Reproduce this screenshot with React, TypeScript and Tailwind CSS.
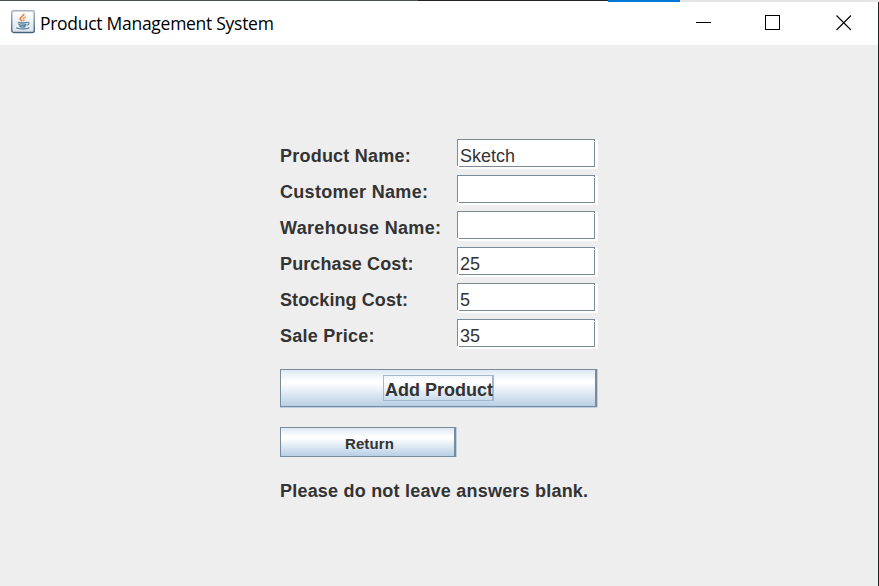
import React from 'react';

type Field = { label: string; value: string; tracking: string };

const fields: Field[] = [
  { label: 'Product Name:', value: 'Sketch', tracking: 'tracking-[0.22px]' },
  { label: 'Customer Name:', value: '', tracking: 'tracking-[0.3px]' },
  { label: 'Warehouse Name:', value: '', tracking: 'tracking-[0.33px]' },
  { label: 'Purchase Cost:', value: '25', tracking: 'tracking-[0.12px]' },
  { label: 'Stocking Cost:', value: '5', tracking: 'tracking-[0.08px]' },
  { label: 'Sale Price:', value: '35', tracking: 'tracking-[0.24px]' },
];

function JavaIcon() {
  return (
    <svg width="24" height="24" viewBox="0 0 24 24" fill="none" className="block">
      <defs>
        <linearGradient id="tile" x1="0" y1="0" x2="0" y2="1">
          <stop offset="0" stopColor="#ffffff" />
          <stop offset="1" stopColor="#dce3e9" />
        </linearGradient>
        <linearGradient id="edge" x1="0" y1="0" x2="0" y2="1">
          <stop offset="0" stopColor="#a3b2bd" />
          <stop offset="1" stopColor="#42627c" />
        </linearGradient>
      </defs>
      <rect x="0.75" y="0.75" width="22.5" height="21.700" rx="2" fill="url(#tile)" stroke="url(#edge)" strokeWidth="1.4" />
      <path d="M12.8 3.8c.8 2-3.8 3-3.6 5.1.1 1.100 1.300 1.700 2 2.500" stroke="#e8853d" strokeWidth="1.700" />
      <path d="M15 6.800c-2.300.8-3 1.700-2.200 2.700.6.8.3 1.200-.4 1.800" stroke="#ec9d61" strokeWidth="1.400" />
      <path d="M6.800 12.400c1.500.9 7 .8 9 0M7.500 14.400c2 .9 6 .9 7.900.1M8.400 16.400c1.500.7 4.500.7 6.100.1" stroke="#4f7b9e" strokeWidth="1.400" />
      <path d="M16 12.400c2.900-.6 2.600 2.100.1 2.900" stroke="#5f87a7" strokeWidth="1.200" />
      <path d="M6.200 17.600c-3 1 9.300 2.600 12.200-.1" stroke="#6c90ad" strokeWidth="1.300" />
    </svg>
  );
}

function TitleBar() {
  return (
    <header className="flex h-[43px] bg-white pl-[11px]">
      <div className="mt-[8px] h-6 w-6">
        <JavaIcon />
      </div>
      <h1 className="ml-[5px] mt-[8px] whitespace-nowrap font-['Open_Sans','Noto_Sans',sans-serif] text-[17.500px] leading-[26px] tracking-[-0.280px] text-black">
        Product Management System
      </h1>
      <div className="ml-auto mr-[26px] mt-[12px] flex">
        <svg width="16" height="17" shapeRendering="crispEdges" className="block">
          <path d="M0 8.500h15" stroke="#000" />
        </svg>
        <svg width="16" height="17" shapeRendering="crispEdges" className="ml-[53px] block">
          <rect x="0.500" y="1.500" width="14" height="14" fill="none" stroke="#000" />
        </svg>
        <svg width="16" height="17" className="ml-[55px] block">
          <path d="M.5 1.500l14.500 14.500M15 1.500l-14.500 14.500" stroke="#000" strokeWidth="1.100" />
        </svg>
      </div>
    </header>
  );
}

function FieldRow({ label, value, tracking }: Field) {
  return (
    <div className="flex h-9">
      <span className={`w-[177px] whitespace-nowrap pt-[6px] text-[18px] font-bold leading-[22px] ${tracking}`}>
        {label}
      </span>
      <div className="relative h-[28px] w-[138px] border border-[#7a8a99] bg-white pl-[2px] pt-[5px] text-[18px] leading-[22px] shadow-[1px_2px_0_0_#fff,3px_2px_0_0_#fff,3px_1px_0_0_#fff]">
        {value}
        <i className="absolute -bottom-px -left-px h-px w-[2px] bg-white" />
        <i className="absolute -right-px top-px h-px w-px bg-white" />
      </div>
    </div>
  );
}

export default function App() {
  return (
    <div className="flex h-[586px] w-[879px] overflow-hidden bg-[#eeeeee] font-['Liberation_Sans',Arial,sans-serif] text-[#333333]">
      <div className="flex w-[878px] flex-col">
        <div className="flex h-[2px] bg-white">
          <div className="h-px w-[418px] bg-[#4b5054]" />
          <div className="h-px w-[190px] bg-[#222222]" />
          <div className="h-[2px] w-[72px] bg-[#0078d7]" />
          <div className="h-[2px] flex-1 bg-[#e5e5e5]" />
        </div>
        <TitleBar />
        <main className="flex flex-1 flex-col items-start pl-[280px] pt-[94px]">
          {fields.map((f) => (
            <FieldRow key={f.label} {...f} />
          ))}
          <button className="mt-[14px] flex h-[38px] w-[317px] border border-r-2 border-[#7a8a99] bg-[linear-gradient(#dde8f3_0%,#fff_30%,#fff_36%,#b8cfe5_100%)] pl-[102px] pt-[5px] shadow-[1px_0_0_0_#b8cfe5,0_1px_0_0_#b8cfe5]">
            <span className="h-[26px] w-[111px] whitespace-nowrap border border-r-2 border-[#a3b8cc] pl-px pt-px text-left text-[18px] font-bold leading-[26px]">
              Add Product
            </span>
          </button>
          <button className="mt-[20px] h-[30px] w-[176px] border border-r-2 border-[#7a8a99] bg-[linear-gradient(#dde8f3_0%,#fff_30%,#fff_36%,#b8cfe5_100%)] pl-[64px] pt-[3px] text-left text-[15px] font-bold leading-[25px] tracking-[0.100px] shadow-[1px_0_0_0_#b8cfe5]">
            Return
          </button>
          <p className="mt-[23px] whitespace-nowrap text-[18px] font-bold leading-[22px] tracking-[0.210px]">
            Please do not leave answers blank.
          </p>
        </main>
      </div>
      <div className="mt-[2px] w-px bg-[#1d2224]" />
    </div>
  );
}
